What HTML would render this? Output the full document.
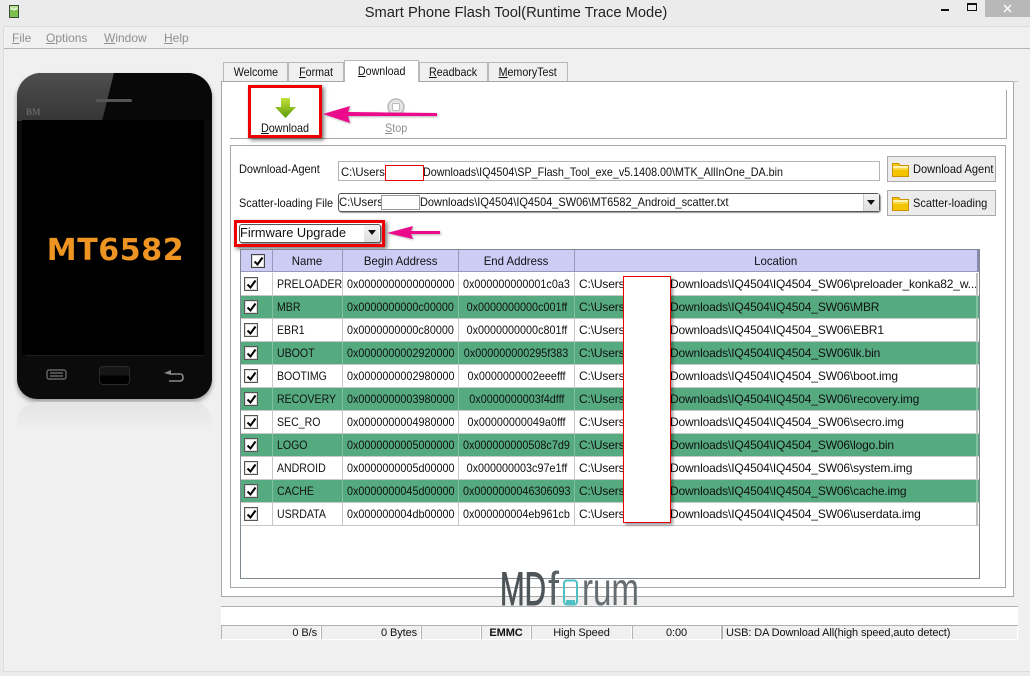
<!DOCTYPE html>
<html><head><meta charset="utf-8"><style>
html,body{margin:0;padding:0}
body{width:1030px;height:676px;position:relative;overflow:hidden;background:#ebebeb;font:12px "Liberation Sans",sans-serif;color:#111}
div,span.a,svg.a{position:absolute;box-sizing:border-box}
.t{white-space:nowrap;line-height:14px}
u{text-decoration:underline}
b{display:inline-block;font-weight:normal;transform-origin:left center;transform:scaleX(var(--s,.9))}
.o{transform-origin:center center;margin:0 -14px}
.m{color:#8f8f8f}
.tab{top:62px;height:19px;background:#f0f0f0;border:1px solid #b8b8b8;border-bottom:none;text-align:center;line-height:18px;--s:.89}
.row{left:241px;width:738px;height:23px;background:#fff;border-bottom:1px solid #c8c8c8}
.row.g{background:#55aa80}
.c{top:0;height:22px;line-height:22px;white-space:nowrap;border-right:1px solid #c8c8c8}
.c1{left:0;width:32px}.c2{left:32px;width:70px;padding-left:4px;--s:.88}.c3{left:102px;width:116px;text-align:center}.c4{left:218px;width:116px;text-align:center}.c5{left:334px;width:403px;padding-left:4px;overflow:hidden;border-right:2px solid #c0c0c0;letter-spacing:-.15px}
.g .c{border-right-color:#7fc0a0}
.cb{left:3px;top:4px;width:14px;height:14px;background:#fff;border:1px solid #555;box-shadow:inset 0 0 0 1px #ddd}
.cb svg{position:absolute;left:1px;top:1px}
.h{top:250px;height:22px;background:#ccccf5;border-right:1px solid #9898b8;border-bottom:1px solid #9898b8;text-align:center;line-height:23px;--s:.95}
.red{background:#fff;border:1px solid #e60000}
.box{border:3px solid #ee0000;box-shadow:2px 2px 4px rgba(0,0,0,.55)}
.st{top:626px;height:13px;background:#f0f0f0;border-left:1px solid #b4b4b4;line-height:14px;white-space:nowrap;font-size:11px;letter-spacing:-.1px}
.btn{left:887px;width:109px;height:26px;background:#ececec;border:1px solid #aaa;line-height:24px;padding-left:25px;white-space:nowrap;--s:.92}
</style></head><body>

<!-- title bar -->
<svg class="a" style="left:9px;top:5px" width="10" height="13" viewBox="0 0 10 13"><rect width="10" height="13" fill="#3a4a3a"/><rect x="1" y="1" width="8" height="4" fill="#b8e090"/><rect x="1" y="5" width="8" height="7" fill="#7cc050"/><path d="M2 3l3 2 3-2" stroke="#fff" fill="none"/></svg>
<div class="t" style="left:316px;width:400px;top:5px;text-align:center;font-size:14.7px;line-height:17px;color:#222">Smart Phone Flash Tool(Runtime Trace Mode)</div>
<div style="left:941px;top:9px;width:8px;height:2px;background:#111"></div>
<div style="left:967px;top:3px;width:10px;height:8px;border:1px solid #111;border-top-width:2px"></div>
<div style="left:985px;top:0;width:45px;height:17px;background:#b8b8b8"></div>
<svg class="a" style="left:1003px;top:4px" width="9" height="9"><path d="M1 1l7 7M8 1l-7 7" stroke="#fff" stroke-width="1.4"/></svg>

<!-- window -->
<div style="left:3px;top:26px;width:1027px;height:646px;background:#f0f0f0;border-left:1px solid #dcdcdc;border-top:1px solid #dcdcdc;border-bottom:1px solid #dcdcdc"></div>
<div style="left:4px;top:48px;width:1026px;height:1px;background:#b4b4b4"></div>
<div class="t m" style="left:12px;top:31px"><u>F</u>ile</div>
<div class="t m" style="left:46px;top:31px"><u>O</u>ptions</div>
<div class="t m" style="left:104px;top:31px"><u>W</u>indow</div>
<div class="t m" style="left:164px;top:31px"><u>H</u>elp</div>

<!-- phone -->
<div style="left:17px;top:73px;width:195px;height:326px;background:#0b0b0b;border-radius:24px 24px 20px 20px;box-shadow:0 3px 5px rgba(0,0,0,.35);overflow:hidden">
  <div style="left:0;top:0;width:97px;height:48px;background:linear-gradient(#4e4e4e,#363636);clip-path:polygon(0 0,100% 0,88% 100%,0 100%)"></div>
  <div style="left:80px;top:0;width:115px;height:48px;background:#080808;clip-path:polygon(17px 0,100% 0,100% 100%,5px 100%)"></div>
  <div style="left:79px;top:26px;width:36px;height:3px;background:#555;border-radius:2px"></div>
  <div class="t" style="left:9px;top:34px;font:bold 9px 'Liberation Serif',serif;color:#666">BM</div>
  <div style="left:5px;top:47px;width:182px;height:235px;background:#000"></div>
  <div style="left:9px;top:282px;width:178px;height:1px;background:#1e1e1e"></div>
  <svg class="a" style="left:28px;top:295px" width="24" height="14" fill="none" stroke="#666" stroke-width="1.4"><rect x="2" y="2" width="19" height="9" rx="2"/><path d="M5 5h13M5 8h13"/></svg>
  <div style="left:82px;top:293px;width:31px;height:19px;border:1px solid #2a2a2a;border-radius:4px;background:linear-gradient(#161616 50%,#000 50%)"></div>
  <svg class="a" style="left:145px;top:295px" width="24" height="16" fill="none" stroke="#8a8a8a" stroke-width="1.6"><path d="M8 6h10q3 0 3 3.500t-3 3.500h-11"/><path d="M2 5l7-3v5z" fill="#8a8a8a" stroke="none"/></svg>
</div>
<div style="left:17px;top:402px;width:195px;height:30px;background:linear-gradient(#e4e4e4,#f0f0f0);border-radius:20px 20px 0 0"></div>
<div class="t" style="left:15px;top:232px;width:201px;text-align:center;font:bold 30px/37px 'DejaVu Sans',sans-serif;letter-spacing:.6px;color:#ee9422">MT6582</div>

<!-- tabs -->
<div class="tab" style="left:223px;width:65px"><b class="o">Welcome</b></div>
<div class="tab" style="left:288px;width:56px"><b class="o"><u>F</u>ormat</b></div>
<div class="tab" style="left:419px;width:69px"><b class="o"><u>R</u>eadback</b></div>
<div class="tab" style="left:488px;width:80px"><b class="o"><u>M</u>emoryTest</b></div>

<!-- pane -->
<div style="left:221px;top:81px;width:793px;height:516px;background:#fff;border:1px solid #a8a8a8"></div>
<div style="left:1013px;top:81px;width:5px;height:1px;background:#c4c4c4"></div>
<div class="tab" style="left:344px;top:60px;width:75px;height:22px;background:#fff;line-height:20px"><b class="o"><u>D</u>ownload</b></div>

<!-- toolbar -->
<div style="left:230px;top:90px;width:777px;height:49px;border-right:1px solid #a8a8a8;border-bottom:1px solid #a8a8a8"></div>
<svg class="a" style="left:275px;top:97px" width="22" height="22"><defs><linearGradient id="ga" x1="0" y1="0" x2="0" y2="1"><stop offset="0" stop-color="#c4e23c"/><stop offset="1" stop-color="#5a9a08"/></linearGradient></defs><path d="M6 1h9v9h6L10.500 21 0 10h6z" fill="url(#ga)"/></svg>
<div class="t" style="left:261px;top:121px"><b><u>D</u>ownload</b></div>
<svg class="a" style="left:386px;top:97px" width="20" height="20"><circle cx="10" cy="10" r="8" fill="#e4e4e4" stroke="#b8b8b8" stroke-width="1.500"/><rect x="6.500" y="6.500" width="7" height="7" rx="1" fill="#fff" stroke="#bbb"/></svg>
<div class="t" style="left:385px;top:121px;color:#909090"><b><u>S</u>top</b></div>

<!-- group box -->
<div style="left:230px;top:145px;width:776px;height:443px;border:1px solid #a8a8a8"></div>
<div class="t" style="left:239px;top:162px"><b style="--s:.91">Download-Agent</b></div>
<div class="t" style="left:239px;top:196px"><b style="--s:.91">Scatter-loading File</b></div>

<div class="t" style="left:338px;top:161px;width:542px;height:20px;border:1px solid #b4b4b4;line-height:20px;padding-left:2px;background:#fff"><b style="--s:.94">C:\Users</b></div>
<div class="t" style="left:423px;top:165px"><b style="--s:.895">Downloads\IQ4504\SP_Flash_Tool_exe_v5.1408.00\MTK_AllInOne_DA.bin</b></div>
<div class="red" style="left:385px;top:165px;width:39px;height:16px"></div>

<div class="t" style="left:338px;top:193px;width:542px;height:19px;border:1px solid #555;border-radius:3px;line-height:17px;background:#fff;box-shadow:1px 1px 1px #999"><b style="--s:.94">C:\Users</b></div>
<div class="t" style="left:420px;top:195px"><b style="--s:.914">Downloads\IQ4504\IQ4504_SW06\MT6582_Android_scatter.txt</b></div>
<div style="left:381px;top:195px;width:39px;height:15px;background:#fff;border:1px solid #999"></div>
<div style="left:863px;top:194px;width:16px;height:17px;background:linear-gradient(#f4f4f4,#ddd);border-left:1px solid #ccc"></div>
<svg class="a" style="left:866px;top:200px" width="10" height="5"><path d="M1 0h8L5 5z" fill="#111"/></svg>

<div class="btn" style="top:156px;"><b>Download Agent</b></div>
<div class="btn" style="top:190px;"><b>Scatter-loading</b></div>
<svg class="a" style="left:892px;top:162px" width="17" height="15"><path d="M0.500 1.500h6l2 2h8v11h-16z" fill="#f5c400" stroke="#c89200"/><rect x="1" y="4" width="15" height="2" fill="#fff2b0"/><rect x="1" y="6" width="15" height="2" fill="#f8d840"/></svg>
<svg class="a" style="left:892px;top:196px" width="17" height="15"><path d="M0.500 1.500h6l2 2h8v11h-16z" fill="#f5c400" stroke="#c89200"/><rect x="1" y="4" width="15" height="2" fill="#fff2b0"/><rect x="1" y="6" width="15" height="2" fill="#f8d840"/></svg>

<!-- firmware combo -->
<div class="t" style="left:239px;top:224px;width:142px;height:19px;border:1px solid #555;border-radius:3px;line-height:15px;background:#fff;box-shadow:1px 1px 1px #888;font-size:12.8px"><b style="--s:1">Firmware Upgrade</b></div>
<div style="left:364px;top:225px;width:15px;height:17px;background:linear-gradient(#f4f4f4,#ddd)"></div>
<svg class="a" style="left:367px;top:230px" width="10" height="5"><path d="M1 0h8L5 5z" fill="#111"/></svg>
<div class="box" style="left:234px;top:220px;width:151px;height:27px"></div>
<div class="box" style="left:248px;top:85px;width:74px;height:53px"></div>

<!-- arrows -->
<svg class="a" style="left:320px;top:100px;filter:drop-shadow(1px 1px 1px rgba(0,0,0,.3))" width="125" height="28"><path d="M3 14L30 6 28 12 117 13 117 16 28 16 30 23z" fill="#ec0a8c"/></svg>
<svg class="a" style="left:385px;top:222px;filter:drop-shadow(1px 1px 1px rgba(0,0,0,.3))" width="62" height="22"><path d="M2 11L28 4 26 9 55 9 55 12 26 12 28 17z" fill="#ec0a8c"/></svg>

<!-- table -->
<div style="left:240px;top:249px;width:740px;height:330px;background:#fff;border:1px solid #7f8a90"></div>
<div class="h" style="left:241px;width:32px"></div>
<div class="h" style="left:273px;width:70px"><b class="o">Name</b></div>
<div class="h" style="left:343px;width:116px"><b class="o">Begin Address</b></div>
<div class="h" style="left:459px;width:116px"><b class="o">End Address</b></div>
<div class="h" style="left:575px;width:404px;border-right:2px solid #8a8ab0"><b class="o">Location</b></div>
<div class="cb" style="left:251px;top:254px;border-color:#444"><svg width="11" height="11"><path d="M1.500 5.500l3 3 5-7" fill="none" stroke="#000" stroke-width="2"/></svg></div>

<div class="row" style="top:273px"><div class="c c1"><div class="cb"><svg width="11" height="11"><path d="M1.500 5.500l3 3 5-7" fill="none" stroke="#000" stroke-width="2"/></svg></div></div><div class="c c2"><b>PRELOADER</b></div><div class="c c3"><b class="o">0x0000000000000000</b></div><div class="c c4"><b class="o">0x000000000001c0a3</b></div><div class="c c5">C:\Users<span style="position:absolute;left:95px">Downloads\IQ4504\IQ4504_SW06\preloader_konka82_w...</span></div></div>
<div class="row g" style="top:296px"><div class="c c1"><div class="cb"><svg width="11" height="11"><path d="M1.500 5.500l3 3 5-7" fill="none" stroke="#000" stroke-width="2"/></svg></div></div><div class="c c2"><b>MBR</b></div><div class="c c3"><b class="o">0x0000000000c00000</b></div><div class="c c4"><b class="o">0x0000000000c001ff</b></div><div class="c c5">C:\Users<span style="position:absolute;left:95px">Downloads\IQ4504\IQ4504_SW06\MBR</span></div></div>
<div class="row" style="top:319px"><div class="c c1"><div class="cb"><svg width="11" height="11"><path d="M1.500 5.500l3 3 5-7" fill="none" stroke="#000" stroke-width="2"/></svg></div></div><div class="c c2"><b>EBR1</b></div><div class="c c3"><b class="o">0x0000000000c80000</b></div><div class="c c4"><b class="o">0x0000000000c801ff</b></div><div class="c c5">C:\Users<span style="position:absolute;left:95px">Downloads\IQ4504\IQ4504_SW06\EBR1</span></div></div>
<div class="row g" style="top:342px"><div class="c c1"><div class="cb"><svg width="11" height="11"><path d="M1.500 5.500l3 3 5-7" fill="none" stroke="#000" stroke-width="2"/></svg></div></div><div class="c c2"><b>UBOOT</b></div><div class="c c3"><b class="o">0x0000000002920000</b></div><div class="c c4"><b class="o">0x000000000295f383</b></div><div class="c c5">C:\Users<span style="position:absolute;left:95px">Downloads\IQ4504\IQ4504_SW06\lk.bin</span></div></div>
<div class="row" style="top:365px"><div class="c c1"><div class="cb"><svg width="11" height="11"><path d="M1.500 5.500l3 3 5-7" fill="none" stroke="#000" stroke-width="2"/></svg></div></div><div class="c c2"><b>BOOTIMG</b></div><div class="c c3"><b class="o">0x0000000002980000</b></div><div class="c c4"><b class="o">0x0000000002eeefff</b></div><div class="c c5">C:\Users<span style="position:absolute;left:95px">Downloads\IQ4504\IQ4504_SW06\boot.img</span></div></div>
<div class="row g" style="top:388px"><div class="c c1"><div class="cb"><svg width="11" height="11"><path d="M1.500 5.500l3 3 5-7" fill="none" stroke="#000" stroke-width="2"/></svg></div></div><div class="c c2"><b>RECOVERY</b></div><div class="c c3"><b class="o">0x0000000003980000</b></div><div class="c c4"><b class="o">0x0000000003f4dfff</b></div><div class="c c5">C:\Users<span style="position:absolute;left:95px">Downloads\IQ4504\IQ4504_SW06\recovery.img</span></div></div>
<div class="row" style="top:411px"><div class="c c1"><div class="cb"><svg width="11" height="11"><path d="M1.500 5.500l3 3 5-7" fill="none" stroke="#000" stroke-width="2"/></svg></div></div><div class="c c2"><b>SEC_RO</b></div><div class="c c3"><b class="o">0x0000000004980000</b></div><div class="c c4"><b class="o">0x00000000049a0fff</b></div><div class="c c5">C:\Users<span style="position:absolute;left:95px">Downloads\IQ4504\IQ4504_SW06\secro.img</span></div></div>
<div class="row g" style="top:434px"><div class="c c1"><div class="cb"><svg width="11" height="11"><path d="M1.500 5.500l3 3 5-7" fill="none" stroke="#000" stroke-width="2"/></svg></div></div><div class="c c2"><b>LOGO</b></div><div class="c c3"><b class="o">0x0000000005000000</b></div><div class="c c4"><b class="o">0x000000000508c7d9</b></div><div class="c c5">C:\Users<span style="position:absolute;left:95px">Downloads\IQ4504\IQ4504_SW06\logo.bin</span></div></div>
<div class="row" style="top:457px"><div class="c c1"><div class="cb"><svg width="11" height="11"><path d="M1.500 5.500l3 3 5-7" fill="none" stroke="#000" stroke-width="2"/></svg></div></div><div class="c c2"><b>ANDROID</b></div><div class="c c3"><b class="o">0x0000000005d00000</b></div><div class="c c4"><b class="o">0x000000003c97e1ff</b></div><div class="c c5">C:\Users<span style="position:absolute;left:95px">Downloads\IQ4504\IQ4504_SW06\system.img</span></div></div>
<div class="row g" style="top:480px"><div class="c c1"><div class="cb"><svg width="11" height="11"><path d="M1.500 5.500l3 3 5-7" fill="none" stroke="#000" stroke-width="2"/></svg></div></div><div class="c c2"><b>CACHE</b></div><div class="c c3"><b class="o">0x0000000045d00000</b></div><div class="c c4"><b class="o">0x0000000046306093</b></div><div class="c c5">C:\Users<span style="position:absolute;left:95px">Downloads\IQ4504\IQ4504_SW06\cache.img</span></div></div>
<div class="row" style="top:503px"><div class="c c1"><div class="cb"><svg width="11" height="11"><path d="M1.500 5.500l3 3 5-7" fill="none" stroke="#000" stroke-width="2"/></svg></div></div><div class="c c2"><b>USRDATA</b></div><div class="c c3"><b class="o">0x000000004db00000</b></div><div class="c c4"><b class="o">0x000000004eb961cb</b></div><div class="c c5">C:\Users<span style="position:absolute;left:95px">Downloads\IQ4504\IQ4504_SW06\userdata.img</span></div></div>

<div class="red" style="left:623px;top:276px;width:48px;height:247px;box-shadow:2px 2px 3px rgba(0,0,0,.4)"></div>

<!-- status -->
<div style="left:221px;top:606px;width:797px;height:20px;background:#fff;border-top:1px solid #b0b0b0;border-bottom:1px solid #b0b0b0"></div>
<div style="left:221px;top:626px;width:797px;height:14px;background:#fff"></div>
<div class="st" style="left:221px;width:99px;text-align:right;padding-right:3px">0 B/s</div>
<div class="st" style="left:321px;width:99px;text-align:right;padding-right:3px">0 Bytes</div>
<div class="st" style="left:421px;width:59px"></div>
<div class="st" style="left:481px;width:49px;text-align:center;font-weight:bold">EMMC</div>
<div class="st" style="left:531px;width:100px;text-align:center">High Speed</div>
<div class="st" style="left:632px;width:88px;text-align:center">0:00</div>
<div class="st" style="left:721px;width:296px;padding-left:3px;border-left:2px solid #b4b4b4">USB: DA Download All(high speed,auto detect)</div>

<!-- logo -->
<svg class="a" style="left:495px;top:560px" width="150" height="50">
<text x="5" y="45" font-family="Liberation Sans" font-size="47" fill="#4e5558" stroke="#4e5558" stroke-width=".9" textLength="46" lengthAdjust="spacingAndGlyphs">MD</text>
<text x="53" y="45" font-family="Liberation Sans" font-size="47" fill="#5a6165" textLength="11" lengthAdjust="spacingAndGlyphs">f</text>
<rect x="69" y="20.500" width="13" height="24" rx="3" fill="none" stroke="#4fc0c4" stroke-width="2"/><rect x="71" y="40" width="9" height="3.500" fill="#4fc0c4"/>
<text x="87" y="45" font-family="Liberation Sans" font-size="46" fill="#666d71" textLength="57" lengthAdjust="spacingAndGlyphs">rum</text>
</svg>
</body></html>
